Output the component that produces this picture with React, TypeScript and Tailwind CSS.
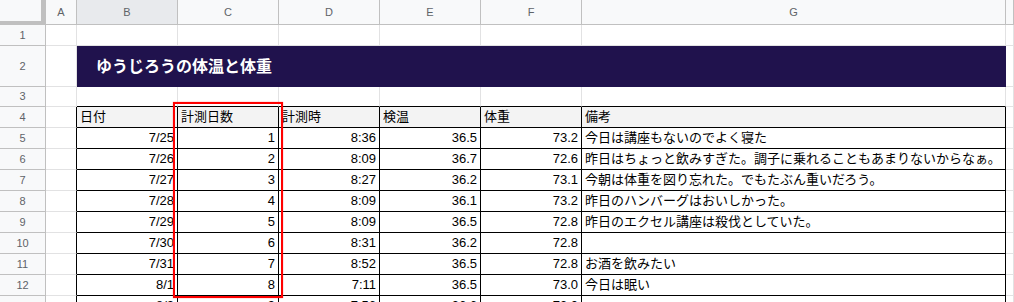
const cols = ['A', 'B', 'C', 'D', 'E', 'F', 'G', ''];

const rows: [string, string, string, string, string, string][] = [
  ['7/25', '1', '8:36', '36.5', '73.2', '今日は講座もないのでよく寝た'],
  ['7/26', '2', '8:09', '36.7', '72.6', '昨日はちょっと飲みすぎた。調子に乗れることもあまりないからなぁ。'],
  ['7/27', '3', '8:27', '36.2', '73.1', '今朝は体重を図り忘れた。でもたぶん重いだろう。'],
  ['7/28', '4', '8:09', '36.1', '73.2', '昨日のハンバーグはおいしかった。'],
  ['7/29', '5', '8:09', '36.5', '72.8', '昨日のエクセル講座は殺伐としていた。'],
  ['7/30', '6', '8:31', '36.2', '72.8', ''],
  ['7/31', '7', '8:52', '36.5', '72.8', 'お酒を飲みたい'],
  ['8/1', '8', '7:11', '36.5', '73.0', '今日は眠い'],
  ['8/2', '9', '7:56', '36.6', '73.0', ''],
];

const rowHead = 'bg-[#f8f9fa] border-r border-b border-[#c0c0c0] flex items-center justify-center text-[11px] text-[#5f6368]';
const grid = 'border-r border-b border-[#e2e2e3]';
const cell = 'border-r border-b border-black flex items-center px-[3px] whitespace-nowrap overflow-hidden';

export default function App() {
  return (
    <div
      className="relative w-[1014px] h-[302px] overflow-hidden bg-white text-black"
      style={{ fontFamily: '"Liberation Sans", Arial, "Noto Sans CJK JP", sans-serif' }}
    >
      <div className="grid grid-cols-[46px_31px_101px_101px_101px_101px_101px_424px_1fr] grid-rows-[25px_21px_41px_20px_repeat(10,21px)]">
        {/* column headers */}
        <div className="bg-[#f8f9fa] border-r-[5px] border-b-4 border-[#c0c0c0]" />
        {cols.map((c, i) => (
          <div
            key={c + i}
            className={`border-r border-b border-[#c0c0c0] flex items-center justify-center text-[11px] text-[#5f6368] ${
              c === 'B' ? 'bg-[#e8eaed]' : 'bg-[#f8f9fa]'
            }`}
          >
            {c}
          </div>
        ))}

        {/* row 1 */}
        <div className={rowHead}>1</div>
        {cols.map((c, i) => (
          <div key={'r1' + i} className={grid} />
        ))}

        {/* row 2 title */}
        <div className={rowHead}>2</div>
        <div className={grid} />
        <div className="col-span-6 bg-[#20124d] border-r border-[#20124d] flex items-center pl-[19px] text-white text-[16px] font-bold">
          ゆうじろうの体温と体重
        </div>
        <div className={grid} />

        {/* row 3 */}
        <div className={rowHead}>3</div>
        <div className={grid} />
        {[0, 1, 2, 3, 4, 5].map((i) => (
          <div key={'r3' + i} className="border-r border-b border-r-[#e2e2e3] border-b-black" />
        ))}
        <div className={grid} />

        {/* row 4 header */}
        <div className={rowHead}>4</div>
        <div className="border-r border-b border-r-black border-b-[#e2e2e3]" />
        {['日付', '計測日数', '計測時', '検温', '体重', '備考'].map((h) => (
          <div key={h} className={`${cell} bg-[#f3f3f3] text-[13px]`}>
            {h}
          </div>
        ))}
        <div className={grid} />

        {/* data */}
        {rows.map((r, ri) => (
          <div key={'d' + ri} className="contents">
            <div className={rowHead}>{ri + 5}</div>
            <div className="border-r border-b border-r-black border-b-[#e2e2e3]" />
            {r.slice(0, 5).map((v, ci) => (
              <div key={ci} className={`${cell} justify-end text-[13px]`}>
                {v}
              </div>
            ))}
            <div className={`${cell} text-[13px]`}>{r[5]}</div>
            <div className={grid} />
          </div>
        ))}
      </div>

      {/* highlight box */}
      <div className="absolute left-[173px] top-[102px] w-[110px] h-[196px] border-2 border-[#ff0000] shadow-[0_0_1px_rgba(255,0,0,0.6)] pointer-events-none" />
    </div>
  );
}
